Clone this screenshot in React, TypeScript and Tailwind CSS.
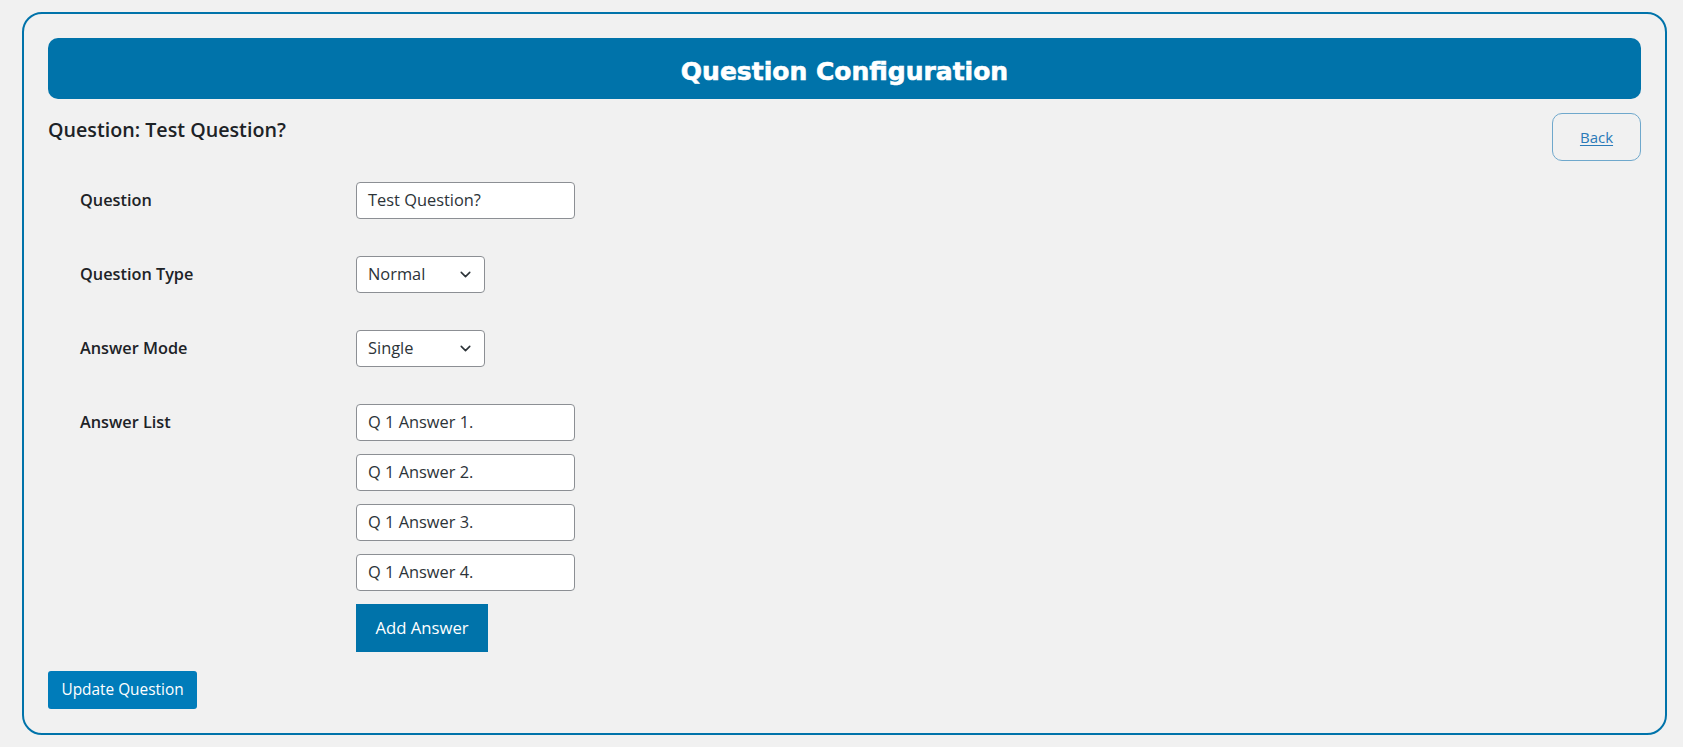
import { ChevronDown } from "lucide-react";

const answers = ["Q 1 Answer 1.", "Q 1 Answer 2.", "Q 1 Answer 3.", "Q 1 Answer 4."];

const font = { fontFamily: "'Open Sans', 'Noto Sans', sans-serif" };

function TextBox({ value }: { value: string }) {
  return (
    <div className="w-[219px] h-[37px] bg-white border border-[#8c8f94] rounded-[4px] flex items-center pl-[11px] text-[16.4px] text-[#2c3338]">
      {value}
    </div>
  );
}

function Select({ value }: { value: string }) {
  return (
    <div className="w-[129px] h-[37px] bg-white border border-[#8c8f94] rounded-[4px] flex items-center justify-between pl-[11px] pr-[10px] text-[16.4px] text-[#2c3338]">
      <span>{value}</span>
      <ChevronDown size={17} strokeWidth={2.2} className="text-[#2c3338]" />
    </div>
  );
}

function Row({ label, children }: { label: string; children: React.ReactNode }) {
  return (
    <div className="flex items-start">
      <div className="w-[308px] pl-[32px] h-[37px] flex items-center text-[16.3px] font-semibold text-[#1d2327]">
        {label}
      </div>
      <div>{children}</div>
    </div>
  );
}

export default function App() {
  return (
    <div className="min-h-screen bg-[#f1f1f1] pt-[12px] pl-[22px] pr-[16px] pb-[12px]" style={font}>
      <div className="border-2 border-[#0073aa] rounded-[20px] p-6">
        {/* header */}
        <div className="h-[61px] rounded-[10px] bg-[#0073aa] flex items-center justify-center">
          <h1
            className="text-white text-[25px] font-bold pt-[6px]"
            style={{ fontFamily: "'DejaVu Sans', sans-serif", WebkitTextStroke: "0.6px white" }}
          >
            Question Configuration
          </h1>
        </div>

        <div className="flex items-start justify-between mt-[14px]">
          <h2 className="mt-[2px] text-[19.7px] font-semibold text-[#1d2327]">Question: Test Question?</h2>
          <button className="w-[89px] h-[48px] border border-[#6fa8cc] rounded-[10px] text-[15px] text-[#2a7ab8] underline underline-offset-2">
            Back
          </button>
        </div>

        <div className="flex flex-col gap-[37px] mt-[21px]">
          <Row label="Question">
            <TextBox value="Test Question?" />
          </Row>
          <Row label="Question Type">
            <Select value="Normal" />
          </Row>
          <Row label="Answer Mode">
            <Select value="Single" />
          </Row>
          <Row label="Answer List">
            <div className="flex flex-col gap-[13px]">
              {answers.map((a) => (
                <TextBox key={a} value={a} />
              ))}
              <button className="w-[132px] h-[48px] bg-[#0073aa] text-white text-[16.7px]">Add Answer</button>
            </div>
          </Row>
        </div>

        <button className="mt-[19px] w-[149px] h-[38px] bg-[#007cba] rounded-[3px] text-white text-[15.4px]">
          Update Question
        </button>
      </div>
    </div>
  );
}
